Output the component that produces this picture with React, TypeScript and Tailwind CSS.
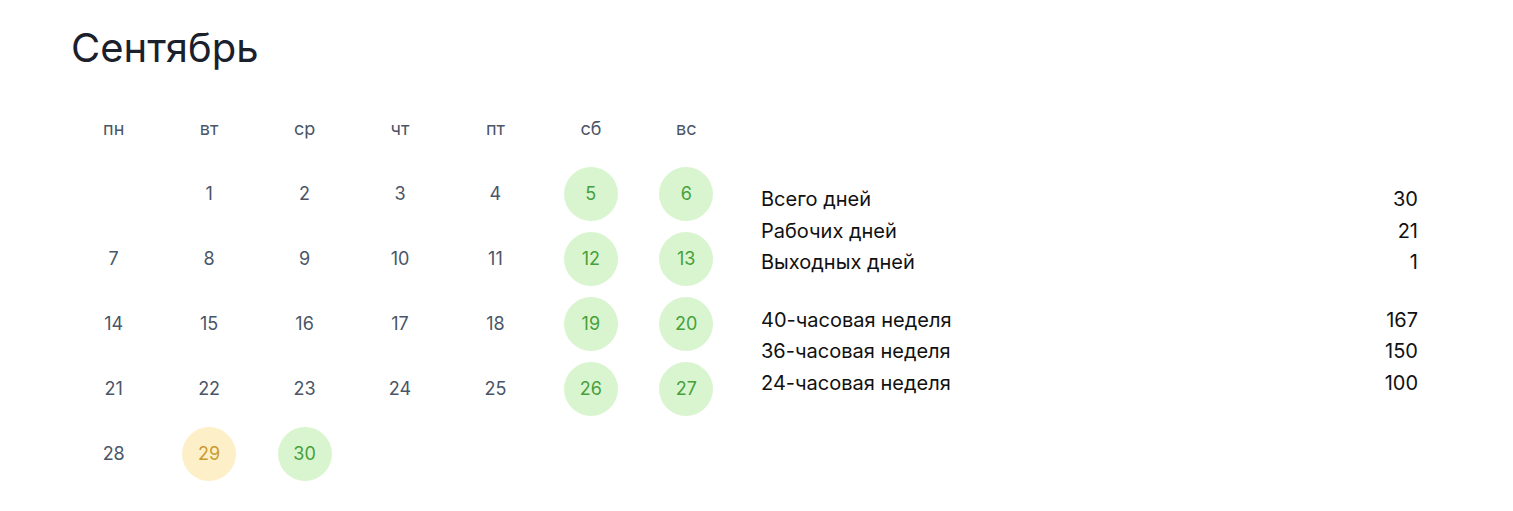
import React from "react";

type Day = { n: number | null; kind?: "weekend" | "short" };

const headers = ["пн", "вт", "ср", "чт", "пт", "сб", "вс"];

const weekends = new Set([5, 6, 12, 13, 19, 20, 26, 27, 30]);

function buildDays(): Day[] {
  const days: Day[] = [{ n: null }];
  for (let i = 1; i <= 30; i++) {
    if (i === 29) days.push({ n: i, kind: "short" });
    else if (weekends.has(i)) days.push({ n: i, kind: "weekend" });
    else days.push({ n: i });
  }
  return days;
}

const stats1 = [
  ["Всего дней", "30"],
  ["Рабочих дней", "21"],
  ["Выходных дней", "1"],
];
const stats2 = [
  ["40-часовая неделя", "167"],
  ["36-часовая неделя", "150"],
  ["24-часовая неделя", "100"],
];

export default function App() {
  const days = buildDays();
  return (
    <div
      className="w-[1513px] h-[511px] bg-white"
      style={{ fontFamily: "Inter, 'Noto Sans', sans-serif" }}
    >
      <div className="pl-[71px] pt-[24px]">
        <h1 className="text-[40px] leading-[48px] text-[#1a202c] font-normal">Сентябрь</h1>
      </div>
      <div className="flex items-start pl-[66px] mt-[24px]">
        <div className="grid grid-cols-7 w-[668px]">
          {headers.map((h) => (
            <div
              key={h}
              className="h-[65px] flex items-center justify-center text-[18px] text-[#4a5568]"
            >
              {h}
            </div>
          ))}
          {days.map((d, i) => (
            <div key={i} className="h-[65px] flex items-center justify-center">
              {d.n !== null &&
                (d.kind === "weekend" ? (
                  <div className="w-[54px] h-[54px] rounded-full bg-[#d9f5d0] text-[#47a03b] flex items-center justify-center text-[18px]">
                    {d.n}
                  </div>
                ) : d.kind === "short" ? (
                  <div className="w-[54px] h-[54px] rounded-full bg-[#fdf0c9] text-[#c99b2f] flex items-center justify-center text-[18px]">
                    {d.n}
                  </div>
                ) : (
                  <div className="text-[18px] text-[#4a5568]">{d.n}</div>
                ))}
            </div>
          ))}
        </div>
        <div className="ml-[27px] w-[657px] mt-[88px] text-[20px] leading-[31.5px] text-[#111111]">
          {stats1.map(([l, v]) => (
            <div key={l} className="flex justify-between">
              <span>{l}</span>
              <span>{v}</span>
            </div>
          ))}
          <div className="mt-[26px]">
            {stats2.map(([l, v]) => (
              <div key={l} className="flex justify-between">
                <span>{l}</span>
                <span>{v}</span>
              </div>
            ))}
          </div>
        </div>
      </div>
    </div>
  );
}
